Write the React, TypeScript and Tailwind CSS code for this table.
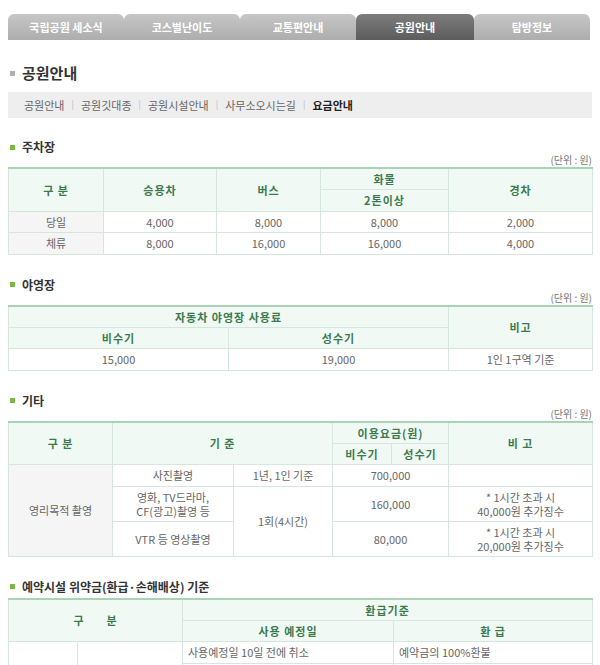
import React from "react";

const tabs = ["국립공원 세소식", "코스별난이도", "교통편안내", "공원안내", "탐방정보"];
const crumbs = ["공원안내", "공원깃대종", "공원시설안내", "사무소오시는길", "요금안내"];

const th =
  "border border-[#d5e6dc] bg-[#f1f9f4] text-[#3b7a4f] font-bold text-center tracking-[1px] h-[21.5px] p-0";
const thTop = "border-t-2 border-t-[#a8d3b4]";
const td = "border border-[#d5e6dc] text-[#666] text-center h-[21.5px] p-0";
const tdGray = "border border-[#d5e6dc] bg-[#f5f5f5] text-[#666] text-center h-[21.5px] p-0";

const SectionTitle = ({ title }: { title: string }) => (
  <div className="flex items-center h-[14px] pl-[2px]">
    <span className="w-[5px] h-[5px] bg-[#78b843] mr-[7px]" />
    <span className="text-[12px] font-bold text-[#333] leading-[14px]">{title}</span>
  </div>
);

const Unit = () => (
  <div className="h-[12px] leading-[12px] text-right text-[10px] text-[#777]">(단위 : 원)</div>
);

export default function App() {
  return (
    <div
      className="w-[600px] bg-white px-2 pt-[14px] pb-10 text-[11px]"
      style={{ fontFamily: '"Noto Sans CJK KR", "Noto Sans", sans-serif' }}
    >
      {/* tabs */}
      <div className="flex">
        {tabs.map((t, i) => (
          <div
            key={t}
            className={
              "h-[26px] flex items-center justify-center rounded-t-[6px] text-[11px] font-bold text-white " +
              (i === 3
                ? "bg-gradient-to-b from-[#7d7d7d] to-[#5c5c5c] w-[118px]"
                : "bg-gradient-to-b from-[#c6c6c6] to-[#adadad] w-[116px]")
            }
          >
            {t}
          </div>
        ))}
      </div>

      {/* page title */}
      <div className="flex items-center h-[18px] mt-[24px] pl-[2px]">
        <span className="w-[5px] h-[5px] bg-[#b0b0b0] mr-[7px]" />
        <span className="text-[15px] font-bold text-[#333]">공원안내</span>
      </div>

      {/* breadcrumb */}
      <div className="mt-[10px] h-[26px] bg-[#eeeeee] flex items-center pl-4 text-[11px]">
        {crumbs.map((c, i) => (
          <React.Fragment key={c}>
            {i > 0 && <span className="mx-[7px] text-[#bbb] text-[9px]">|</span>}
            <span className={i === crumbs.length - 1 ? "font-bold text-[#222]" : "text-[#666]"}>{c}</span>
          </React.Fragment>
        ))}
      </div>

      {/* 주차장 */}
      <div className="mt-[22px]">
        <SectionTitle title="주차장" />
        <Unit />
        <table className="mt-[1px] w-full table-fixed border-collapse leading-[14px]">
          <colgroup>
            <col className="w-[95px]" />
            <col className="w-[113px]" />
            <col className="w-[104px]" />
            <col className="w-[128px]" />
            <col className="w-[144px]" />
          </colgroup>
          <tbody>
            <tr>
              <th rowSpan={2} className={`${th} ${thTop}`}>구 분</th>
              <th rowSpan={2} className={`${th} ${thTop}`}>승용차</th>
              <th rowSpan={2} className={`${th} ${thTop}`}>버스</th>
              <th className={`${th} ${thTop}`}>화물</th>
              <th rowSpan={2} className={`${th} ${thTop}`}>경차</th>
            </tr>
            <tr>
              <th className={th}>2톤이상</th>
            </tr>
            <tr>
              <td className={tdGray}>당일</td>
              <td className={td}>4,000</td>
              <td className={td}>8,000</td>
              <td className={td}>8,000</td>
              <td className={td}>2,000</td>
            </tr>
            <tr>
              <td className={tdGray}>체류</td>
              <td className={td}>8,000</td>
              <td className={td}>16,000</td>
              <td className={td}>16,000</td>
              <td className={td}>4,000</td>
            </tr>
          </tbody>
        </table>
      </div>

      {/* 야영장 */}
      <div className="mt-[23px]">
        <SectionTitle title="야영장" />
        <Unit />
        <table className="mt-[1px] w-full table-fixed border-collapse leading-[14px]">
          <colgroup>
            <col className="w-[220px]" />
            <col className="w-[220px]" />
            <col className="w-[144px]" />
          </colgroup>
          <tbody>
            <tr>
              <th colSpan={2} className={`${th} ${thTop}`}>자동차 야영장 사용료</th>
              <th rowSpan={2} className={`${th} ${thTop}`}>비고</th>
            </tr>
            <tr>
              <th className={th}>비수기</th>
              <th className={th}>성수기</th>
            </tr>
            <tr>
              <td className={td}>15,000</td>
              <td className={td}>19,000</td>
              <td className={td}>1인 1구역 기준</td>
            </tr>
          </tbody>
        </table>
      </div>

      {/* 기타 */}
      <div className="mt-[23px]">
        <SectionTitle title="기타" />
        <Unit />
        <table className="mt-[1px] w-full table-fixed border-collapse leading-[14px]">
          <colgroup>
            <col className="w-[104px]" />
            <col className="w-[121px]" />
            <col className="w-[99px]" />
            <col className="w-[59px]" />
            <col className="w-[57px]" />
            <col className="w-[144px]" />
          </colgroup>
          <tbody>
            <tr>
              <th rowSpan={2} className={`${th} ${thTop}`}>구 분</th>
              <th rowSpan={2} colSpan={2} className={`${th} ${thTop}`}>기 준</th>
              <th colSpan={2} className={`${th} ${thTop}`}>이용요금(원)</th>
              <th rowSpan={2} className={`${th} ${thTop}`}>비 고</th>
            </tr>
            <tr>
              <th className={th}>비수기</th>
              <th className={th}>성수기</th>
            </tr>
            <tr>
              <td rowSpan={3} className={tdGray}>영리목적 촬영</td>
              <td className={td}>사진촬영</td>
              <td className={td}>1년, 1인 기준</td>
              <td colSpan={2} className={td}>700,000</td>
              <td className={td}></td>
            </tr>
            <tr>
              <td className={`${td} h-[35.5px]`}>
                영화, TV드라마,
                <br />
                CF(광고)촬영 등
              </td>
              <td rowSpan={2} className={td}>1회(4시간)</td>
              <td colSpan={2} className={td}>160,000</td>
              <td className={td}>
                * 1시간 초과 시
                <br />
                40,000원 추가징수
              </td>
            </tr>
            <tr>
              <td className={`${td} h-[34.5px]`}>VTR 등 영상촬영</td>
              <td colSpan={2} className={td}>80,000</td>
              <td className={td}>
                * 1시간 초과 시
                <br />
                20,000원 추가징수
              </td>
            </tr>
          </tbody>
        </table>
      </div>

      {/* 예약시설 위약금 */}
      <div className="mt-[23px]">
        <SectionTitle title="예약시설 위약금(환급·손해배상) 기준" />
        <table className="mt-[4px] w-full table-fixed border-collapse leading-[14px]">
          <colgroup>
            <col className="w-[69px]" />
            <col className="w-[105px]" />
            <col className="w-[211px]" />
            <col className="w-[199px]" />
          </colgroup>
          <tbody>
            <tr>
              <th rowSpan={2} colSpan={2} className={`${th} ${thTop} tracking-[0px]`}>
                구<span className="inline-block w-[22px]" />분
              </th>
              <th colSpan={2} className={`${th} ${thTop}`}>환급기준</th>
            </tr>
            <tr>
              <th className={th}>사용 예정일</th>
              <th className={th}>환 급</th>
            </tr>
            <tr>
              <td rowSpan={4} className={td}>예약시설</td>
              <td rowSpan={4} className={td}>야영장</td>
              <td className={`${td} text-left pl-[5px]`}>사용예정일 10일 전에 취소</td>
              <td className={`${td} text-left pl-[5px]`}>예약금의 100%환불</td>
            </tr>
            <tr>
              <td className={`${td} text-left pl-[5px]`}>사용예정일 7일 전에 취소</td>
              <td className={`${td} text-left pl-[5px]`}>예약금의 90%환불</td>
            </tr>
            <tr>
              <td className={`${td} text-left pl-[5px]`}>사용예정일 3일 전에 취소</td>
              <td className={`${td} text-left pl-[5px]`}>예약금의 80%환불</td>
            </tr>
            <tr>
              <td className={`${td} text-left pl-[5px]`}>사용예정일 당일 취소</td>
              <td className={`${td} text-left pl-[5px]`}>예약금의 50%환불</td>
            </tr>
          </tbody>
        </table>
      </div>
    </div>
  );
}
